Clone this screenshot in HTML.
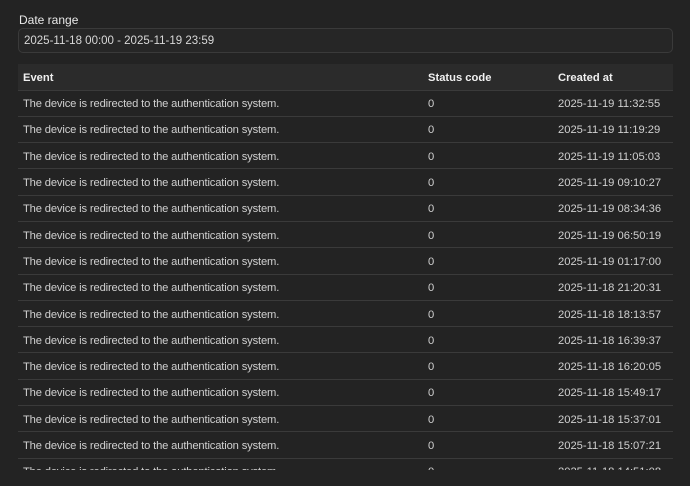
<!DOCTYPE html>
<html><head><style>
body{margin:0;background:#232323;width:690px;height:486px;overflow:hidden;font-family:"Liberation Sans",sans-serif;color:#ddd;}
.lbl{position:absolute;left:19px;top:13px;font-size:12px;color:#e8e8e8;}
.inp{position:absolute;left:18px;top:28px;border:1px solid #3a3a3a;border-radius:5px;background:#262626;font-size:11.5px;line-height:24px;padding-left:5px;box-sizing:border-box;width:655px;height:25px;color:#d8d8d8;}
.wrap{position:absolute;left:18px;top:64px;width:655px;height:406px;overflow:hidden;}
table{border-collapse:collapse;width:655px;font-size:11.2px;}
th{background:#2b2b2b;color:#f0f0f0;font-weight:bold;text-align:left;height:26px;padding:2px 0 0 5px;border-bottom:1px solid #3a3a3a;box-sizing:border-box;}
td{height:23.3px;padding:2px 0 0 5px;border-bottom:1px solid #3a3a3a;color:#d0d0d0;}
td:first-child{letter-spacing:-0.15px;}
</style></head><body>
<div class="lbl">Date range</div>
<div class="inp">2025-11-18 00:00 - 2025-11-19 23:59</div>
<div class="wrap"><table>
<tr><th style="width:405px">Event</th><th style="width:130px">Status code</th><th>Created at</th></tr>
<tr><td>The device is redirected to the authentication system.</td><td>0</td><td>2025-11-19 11:32:55</td></tr>
<tr><td>The device is redirected to the authentication system.</td><td>0</td><td>2025-11-19 11:19:29</td></tr>
<tr><td>The device is redirected to the authentication system.</td><td>0</td><td>2025-11-19 11:05:03</td></tr>
<tr><td>The device is redirected to the authentication system.</td><td>0</td><td>2025-11-19 09:10:27</td></tr>
<tr><td>The device is redirected to the authentication system.</td><td>0</td><td>2025-11-19 08:34:36</td></tr>
<tr><td>The device is redirected to the authentication system.</td><td>0</td><td>2025-11-19 06:50:19</td></tr>
<tr><td>The device is redirected to the authentication system.</td><td>0</td><td>2025-11-19 01:17:00</td></tr>
<tr><td>The device is redirected to the authentication system.</td><td>0</td><td>2025-11-18 21:20:31</td></tr>
<tr><td>The device is redirected to the authentication system.</td><td>0</td><td>2025-11-18 18:13:57</td></tr>
<tr><td>The device is redirected to the authentication system.</td><td>0</td><td>2025-11-18 16:39:37</td></tr>
<tr><td>The device is redirected to the authentication system.</td><td>0</td><td>2025-11-18 16:20:05</td></tr>
<tr><td>The device is redirected to the authentication system.</td><td>0</td><td>2025-11-18 15:49:17</td></tr>
<tr><td>The device is redirected to the authentication system.</td><td>0</td><td>2025-11-18 15:37:01</td></tr>
<tr><td>The device is redirected to the authentication system.</td><td>0</td><td>2025-11-18 15:07:21</td></tr>
<tr><td>The device is redirected to the authentication system.</td><td>0</td><td>2025-11-18 14:51:08</td></tr>
</table></div>
</body></html>
